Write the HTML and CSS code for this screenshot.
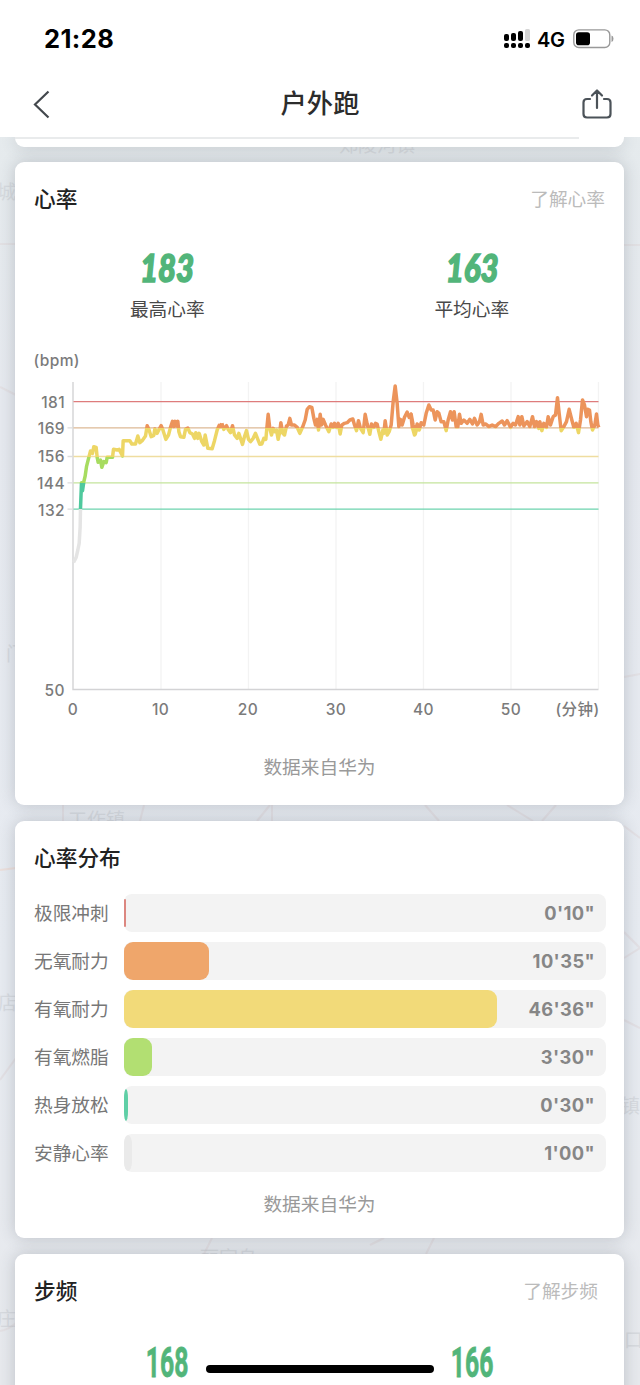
FILE: index.html
```html
<!DOCTYPE html>
<html lang="zh-CN">
<head>
<meta charset="utf-8">
<title>户外跑</title>
<link rel="stylesheet" href="styles.css">
</head>
<body>
<main class="screen">
  <svg class="map" width="640" height="1385" viewBox="0 0 640 1385" aria-hidden="true">
    <g fill="none" stroke="#e0d7da" stroke-width="2" opacity=".5">
      <path d="M0 244h16M0 387l16 8M0 1080l16-22M624 245h16M624 677l16-3M624 826l16 12M624 932l16 16-16 10M624 1020l16 8M0 1331q8-1 16-8"/>
      <path d="M0 870l16-2" stroke="#f0d4c8"/>
      <path d="M63 805v16M144 805l-4 16M270 805l-13 16M272 805v16M425 805l14 16M507 805l26 16M556 805l-14 16M212 1238l-8 16M434 1238l-8 16M370 1245l14-7"/>
    </g>
    <g class="map-names">
      <text x="339" y="152">郑陵河镇</text><text x="-3" y="199">城</text><text x="6" y="661">门</text>
      <text x="68" y="827">工作镇</text><text x="-2" y="1010">店</text><text x="621" y="1113">镇</text>
      <text x="200" y="1265">丽家乌</text><text x="-3" y="1326">庄</text><text x="624" y="1347">口</text>
    </g>
  </svg>

  <header class="top">
    <div class="status">
      <span class="clock">21:28</span>
      <div class="status-icons">
        <svg width="27" height="20" viewBox="0 0 27 20">
          <g fill="#000"><rect x="0" y="5" width="5" height="7" rx="2"/><rect x="7" y="4" width="5" height="8" rx="2"/><rect x="14" y="2" width="5" height="10" rx="2"/><rect x="0" y="14" width="5" height="5" rx="2"/><rect x="7" y="14" width="5" height="5" rx="2"/><rect x="14" y="14" width="5" height="5" rx="2"/><rect x="21" y="14" width="5" height="5" rx="2"/></g>
          <rect x="21" y="0" width="5" height="12" rx="1.5" fill="#d5d5d5"/>
        </svg>
        <span class="network">4G</span>
        <svg width="42" height="20" viewBox="0 0 42 20"><rect x=".8" y=".9" width="36" height="17.6" rx="5" fill="none" stroke="#999" stroke-width="1.4"/><rect x="3" y="3.2" width="14" height="13" rx="2.8"/><path d="M38.500 6.500q2 .5 2 3.200t-2 3.200z" fill="#999"/></svg>
      </div>
    </div>
    <nav class="nav">
      <svg width="18" height="30" viewBox="0 0 18 30" fill="none" stroke="#43484d" stroke-width="2.2"><path d="M15.500 2.500L2 15.500l13.500 13"/></svg>
      <h1>户外跑</h1>
      <svg width="30" height="32" viewBox="0 0 30 32" fill="none" stroke="#4b5258" stroke-width="2.2" stroke-linecap="round" stroke-linejoin="round"><path d="M8 11H5q-3.500 0-3.500 3.500v11.500q0 3.500 3.500 3.500h20q3.500 0 3.500-3.500V14.500q0-3.500-3.500-3.500h-3M15 20V3M10 7.500l5-5 5 5"/></svg>
    </nav>
  </header>

  <section class="card peek"><div class="rule"></div></section>

  <section class="card heart">
    <div class="card-head"><h2>心率</h2><a>了解心率</a></div>
    <div class="stats">
      <div class="stat"><b class="slanted">183</b><span>最高心率</span></div>
      <div class="stat"><b class="slanted">163</b><span>平均心率</span></div>
    </div>
    <svg class="chart" width="609" height="385" viewBox="15.500 345 609 385">
      <defs>
        <linearGradient id="zones" gradientUnits="userSpaceOnUse" x1="0" y1="0" x2="0" y2="700">
          <stop offset=".248" stop-color="#ec945b"/><stop offset=".248" stop-color="#edd665"/>
          <stop offset=".371" stop-color="#edd665"/><stop offset=".371" stop-color="#a7dc60"/>
          <stop offset=".483" stop-color="#a7dc60"/><stop offset=".483" stop-color="#4fc99d"/>
          <stop offset=".595" stop-color="#4fc99d"/><stop offset=".595" stop-color="#e4e4e4"/>
        </linearGradient>
      </defs>
      <path d="M160.500 382v307M248 382v307M335.500 382v307M423 382v307M510.500 382v307M598 382v307" stroke="#f3f3f3" stroke-width="1.300"/>
      <path d="M72.500 382V689.500H598" stroke="#d3d3d5" stroke-width="1.400" fill="none"/>
      <g stroke-width="1.300">
        <path d="M67 427.900h6M67 456.500h6M67 482.900h6M67 509.200h6" stroke="#ddd"/>
        <path d="M73 401.700h525" stroke="#de7c7c"/>
        <path d="M73 427.900h525" stroke="#ddb995"/>
        <path d="M73 456.500h525" stroke="#efdda0"/>
        <path d="M73 482.900h525" stroke="#c4e49c"/>
        <path d="M73 509.200h525" stroke="#6dd3ae"/>
      </g>
      <g transform="translate(0 370) scale(.333333)" fill="none" stroke="url(#zones)" stroke-width="10.500" stroke-linejoin="round">
        <polyline transform="translate(90 0)" points="129,577 137,562 142,540 146,520 149,470 150,415 153,338 156,362 160,335 164,318 168,290 175,262 180,243 186,250 190,230 197,232 200,262 203,277 210,270 214,292 220,275 227,278 230,262 246,262 249,238 260,240 266,238 271,248 276,258 278,212 298,212 304,222 315,222 322,198 328,218 335,212 345,198 350,167 355,178 362,200 370,196 373,177 380,190 386,178 392,167 398,182 406,208 414,195 420,172 426,154 430,170 434,154 437,168 442,154 445,185 450,200 460,202 465,178 472,174 478,188 486,192 492,205 496,188 502,205 506,190 514,215 520,225 524,195 532,235 545,236 552,212 560,180 566,166 570,170 574,160"/>
        <polyline transform="translate(660 0)" points="4,160 10,178 18,167 24,180 30,188 36,167 42,195 50,205 55,190 60,205 66,223 72,200 78,182 84,208 90,215 98,205 105,190 112,208 118,223 124,222 130,205 136,208 139,175 143,133 148,175 153,195 158,175 163,185 168,180 173,208 178,185 181,158 187,190 192,195 198,168 203,165 208,145 213,165 222,165 230,172 238,190 246,172 254,150 260,118 267,110 274,112 280,145 285,165 290,148 294,180 299,133 303,165 308,148 315,165 325,185 332,162 338,172 342,160 348,172 353,160 359,192 364,165 372,160 380,158 388,150 397,147 402,165 408,182 414,152 420,175 428,188 434,133 440,162 448,193 453,162 460,172 465,160 470,162 475,185 481,208 487,180 490,190 494,152 500,195 506,185 512,165 518,95 524,48 530,100 535,170 540,148 545,165 552,142 560,126 566,142 572,133 578,165 584,193 592,165 598,180"/>
        <polyline transform="translate(1230 0)" points="-2,130 1,132 5,170 12,195 20,162 26,180 32,158 40,165 47,130 55,105 62,120 68,120 74,150 80,125 85,130 92,155 100,155 107,182 113,150 120,125 126,150 131,125 137,170 142,170 147,133 152,160 160,150 170,160 178,148 186,162 192,145 200,165 207,155 212,133 218,165 226,162 235,170 245,165 255,170 265,160 275,153 282,165 290,152 300,172 308,160 315,165 323,140 328,165 334,140 340,168 350,155 358,170 366,140 372,170 378,155 385,175 388,155 394,182 400,160 408,172 413,140 420,165 428,140 435,135 441,83 446,130 452,182 460,170 468,155 476,118 484,150 490,172 497,160 504,188 510,150 516,90 522,105 528,140 532,118 537,120 541,155 546,180 553,165 558,132 562,165 565,172"/>
      </g>
      <g class="axis">
        <text x="33" y="365.500">(bpm)</text>
        <g text-anchor="end"><text x="64.500" y="407.500">181</text><text x="64.500" y="433.800">169</text><text x="64.500" y="462.300">156</text><text x="64.500" y="488.700">144</text><text x="64.500" y="515.500">132</text><text x="64.500" y="695.500">50</text></g>
        <g text-anchor="middle"><text x="72.500" y="715">0</text><text x="160" y="715">10</text><text x="247.500" y="715">20</text><text x="335.500" y="715">30</text><text x="423" y="715">40</text><text x="510.500" y="715">50</text></g>
        <text x="599" y="715" text-anchor="end">(分钟)</text>
      </g>
    </svg>
    <p class="source">数据来自华为</p>
  </section>

  <section class="card zones">
    <div class="card-head"><h2>心率分布</h2></div>
    <div class="rows">
      <div class="row"><span>极限冲刺</span><div class="track"><i class="sprint"></i><b>0'10"</b></div></div>
      <div class="row"><span>无氧耐力</span><div class="track"><i class="anaerobic"></i><b>10'35"</b></div></div>
      <div class="row"><span>有氧耐力</span><div class="track"><i class="aerobic"></i><b>46'36"</b></div></div>
      <div class="row"><span>有氧燃脂</span><div class="track"><i class="fat"></i><b>3'30"</b></div></div>
      <div class="row"><span>热身放松</span><div class="track"><i class="warm"></i><b>0'30"</b></div></div>
      <div class="row"><span>安静心率</span><div class="track"><i class="rest"></i><b>1'00"</b></div></div>
    </div>
    <p class="source">数据来自华为</p>
  </section>

  <section class="card cadence">
    <div class="card-head"><h2>步频</h2><a>了解步频</a></div>
    <div class="stats">
      <div class="stat"><b class="narrow">168</b></div>
      <div class="stat"><b class="narrow">166</b></div>
    </div>
  </section>
  <div class="home-bar"></div>
</main>
</body>
</html>
```

FILE: styles.css
```css
* { box-sizing: border-box; }
body { margin: 0; font-family: Inter, "Noto Sans CJK SC", sans-serif; }
h1, h2, p { margin: 0; }
.screen { position: relative; width: 640px; height: 1385px; overflow: hidden; background: linear-gradient(#e5ebec, #e6e9ef 30%, #e7ebf1 70%, #e7e9ed); display: flex; flex-direction: column; }
.map { position: absolute; left: 0; top: 0; }
.map-names { font: 19px "Noto Sans CJK SC", sans-serif; fill: #c9ccd1; opacity: .5; }
.top { position: relative; z-index: 2; height: 137px; flex: none; background: #fff; padding: 23px 28px 0 33px; }
.status { height: 32px; display: flex; justify-content: space-between; align-items: center; padding-left: 11px; margin-right: -3px; }
.clock { font-size: 25.500px; font-weight: 700; line-height: 32px; letter-spacing: .4px; }
.status-icons { display: flex; align-items: center; }
.network { font-size: 20px; font-weight: 600; width: 29px; margin: 1px 7px 0 6px; letter-spacing: -.2px; }
.nav { display: flex; align-items: center; justify-content: space-between; margin-top: 31px; height: 36px; }
.nav h1 { font-size: 26.300px; line-height: 36px; font-weight: 500; color: #2c2c2c; padding-left: 7px; }
.card { position: relative; width: 609px; margin-left: 15px; flex: none; background: #fff; border-radius: 9px; box-shadow: 0 0 16px rgba(60, 65, 80, .24); }
.peek { height: 10px; border-radius: 0 0 9px 9px; }
.rule { width: 564px; height: 2px; background: #e9ebec; }
.heart { margin-top: 15px; height: 643px; }
.zones { margin-top: 16px; height: 417px; }
.cadence { margin-top: 16px; height: 150px; }
.card-head { height: 73px; padding: 0 19px; display: flex; align-items: center; justify-content: space-between; }
.card-head h2 { font-size: 21.700px; line-height: 30px; font-weight: 500; color: #222; }
.card-head a { font-size: 18.700px; color: #bbb; margin-top: -2px; }
.cadence .card-head a { margin-right: 7px; }
.stats { display: grid; grid-template-columns: 1fr 1fr; height: 110px; padding-top: 11px; }
.stat { display: flex; flex-direction: column; align-items: center; }
.stat span { font-size: 18.700px; line-height: 26px; color: #484848; margin-top: 8px; }
.stat b { display: block; line-height: 43px; color: #52b57a; }
.slanted { font-family: Lato, sans-serif; font-size: 38px; font-weight: 900; font-style: italic; transform: scaleX(.82); -webkit-text-stroke: 1.600px #52b57a; }
.narrow { font-family: Roboto, sans-serif; font-size: 42px; font-weight: 700; transform: scaleX(.59); -webkit-text-stroke: .8px #52b57a; }
.cadence .stats { padding-top: 14px; }
.chart { display: block; margin-left: .5px; }
.axis { font: 500 15.500px Inter, "Noto Sans CJK SC", sans-serif; letter-spacing: .4px; fill: #7b7b7b; }
.source { text-align: center; font-size: 18.700px; line-height: 28px; color: #999; }
.heart .source { margin-top: 24px; }
.rows { display: grid; gap: 10px; }
.row { display: flex; align-items: center; height: 38px; padding: 0 18px 0 19px; }
.row > span { width: 90px; font-size: 18.700px; line-height: 28px; color: #777; margin-top: 2px; }
.track { flex: 1; height: 38px; background: #f3f3f3; border-radius: 8px; display: flex; align-items: center; justify-content: space-between; padding-right: 11px; }
.track i { display: block; height: 100%; border-radius: 9px; }
.track b { font-size: 18.300px; font-weight: 700; color: #868686; letter-spacing: .4px; }
.track .sprint { width: 2px; height: 28px; background: #dc8780; border-radius: 1px; }
.track .anaerobic { width: 85px; background: #efa66b; }
.track .aerobic { width: 373px; background: #f2da79; }
.track .fat { width: 28px; background: #b2df72; }
.track .warm { width: 4px; height: 32px; border-radius: 2px / 9px; background: #5fcfa6; }
.track .rest { width: 8px; height: 36px; border-radius: 4px / 9px; background: #eaeaea; }
.zones .source { margin-top: 19px; }
.home-bar { position: absolute; left: 206px; top: 1365px; width: 228px; height: 8px; border-radius: 4px; background: #000; }
```
